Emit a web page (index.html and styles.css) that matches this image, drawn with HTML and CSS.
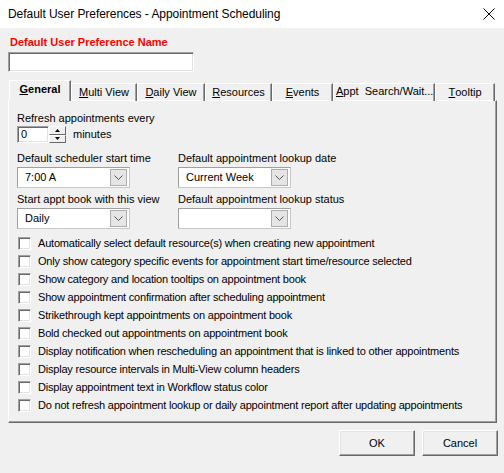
FILE: index.html
```html
<!DOCTYPE html>
<html>
<head>
<meta charset="utf-8">
<link rel="stylesheet" href="styles.css">
</head>
<body>
<div class="window">
  <div class="titlebar">
    <span class="title">Default User Preferences - Appointment Scheduling</span>
    <svg class="close" width="12" height="12" viewBox="0 0 12 12"><path d="M0.5 0.5 L11.5 11.5 M11.5 0.5 L0.5 11.5" stroke="#000" stroke-width="1" fill="none"/></svg>
  </div>
  <div class="content">
    <div class="name-label">Default User Preference Name</div>
    <div class="name-input sunken"></div>
    <div class="tabs">
      <div class="tab selected w1"><b><u>G</u>eneral</b></div>
      <div class="tab w2"><u>M</u>ulti View</div>
      <div class="tab w3"><u>D</u>aily View</div>
      <div class="tab w4"><u>R</u>esources</div>
      <div class="tab w5"><u>E</u>vents</div>
      <div class="tab w6 left"><u>A</u>ppt  Search/Wait...</div>
      <div class="tab w7"><u>T</u>ooltip</div>
    </div>
    <div class="panel">
      <div class="label first">Refresh appointments every</div>
      <div class="spin-row">
        <div class="spin">
          <div class="spin-field sunken">0</div>
          <div class="spin-btns">
            <div class="spin-btn"><svg width="5" height="3" viewBox="0 0 5 3"><path d="M2.5 0 L5 3 L0 3 Z" fill="#000"/></svg></div>
            <div class="spin-btn"><svg width="5" height="3" viewBox="0 0 5 3"><path d="M0 0 L5 0 L2.5 3 Z" fill="#000"/></svg></div>
          </div>
        </div>
        <span class="minutes">minutes</span>
      </div>
      <div class="grid">
        <div class="field">
          <div class="label">Default scheduler start time</div>
          <div class="combo"><span class="combo-text">7:00 A</span><span class="drop"><svg width="9" height="5" viewBox="0 0 9 5"><path d="M0.5 0.5 L4.5 4.5 L8.5 0.5" stroke="#555" fill="none"/></svg></span></div>
        </div>
        <div class="field">
          <div class="label">Default appointment lookup date</div>
          <div class="combo"><span class="combo-text">Current Week</span><span class="drop"><svg width="9" height="5" viewBox="0 0 9 5"><path d="M0.5 0.5 L4.5 4.5 L8.5 0.5" stroke="#555" fill="none"/></svg></span></div>
        </div>
        <div class="field">
          <div class="label">Start appt book with this view</div>
          <div class="combo"><span class="combo-text">Daily</span><span class="drop"><svg width="9" height="5" viewBox="0 0 9 5"><path d="M0.5 0.5 L4.5 4.5 L8.5 0.5" stroke="#555" fill="none"/></svg></span></div>
        </div>
        <div class="field">
          <div class="label">Default appointment lookup status</div>
          <div class="combo"><span class="combo-text"></span><span class="drop"><svg width="9" height="5" viewBox="0 0 9 5"><path d="M0.5 0.5 L4.5 4.5 L8.5 0.5" stroke="#555" fill="none"/></svg></span></div>
        </div>
      </div>
      <div class="checks">
        <div class="check"><span class="box"></span>Automatically select default resource(s) when creating new appointment</div>
        <div class="check"><span class="box"></span>Only show category specific events for appointment start time/resource selected</div>
        <div class="check"><span class="box"></span>Show category and location tooltips on appointment book</div>
        <div class="check"><span class="box"></span>Show appointment confirmation after scheduling appointment</div>
        <div class="check"><span class="box"></span>Strikethrough kept appointments on appointment book</div>
        <div class="check"><span class="box"></span>Bold checked out appointments on appointment book</div>
        <div class="check"><span class="box"></span>Display notification when rescheduling an appointment that is linked to other appointments</div>
        <div class="check"><span class="box"></span>Display resource intervals in Multi-View column headers</div>
        <div class="check"><span class="box"></span>Display appointment text in Workflow status color</div>
        <div class="check"><span class="box"></span>Do not refresh appointment lookup or daily appointment report after updating appointments</div>
      </div>
    </div>
    <div class="buttons">
      <div class="btn">OK</div>
      <div class="btn">Cancel</div>
    </div>
  </div>
</div>
</body>
</html>
```

FILE: styles.css
```css
* { box-sizing: border-box; }
html, body { margin: 0; padding: 0; }
body {
  width: 504px;
  height: 473px;
  overflow: hidden;
  background: #f0f0f0;
  font-family: "Liberation Sans", Arial, sans-serif;
  font-size: 11px;
  color: #000;
}
.titlebar {
  height: 28px;
  background: #fff;
  display: flex;
  align-items: center;
  justify-content: space-between;
  padding: 0 9px 0 8px;
}
.title {
  font-size: 12px;
  color: #000;
  letter-spacing: -0.05px;
}
.close { display: block; }
.content {
  padding: 8px 0 0 8px;
}
.name-label {
  color: #ff0000;
  font-weight: bold;
  line-height: 13px;
  margin-left: 2px;
}
.sunken {
  background: #fff;
  border-top: 1px solid #a0a0a0;
  border-left: 1px solid #a0a0a0;
  border-right: 1px solid #fff;
  border-bottom: 1px solid #fff;
  box-shadow: inset 1px 1px 0 #696969, inset -1px -1px 0 #e3e3e3;
}
.name-input {
  width: 186px;
  height: 20px;
  margin-top: 3px;
}
.tabs {
  display: flex;
  height: 21px;
  margin-top: 8px;
  padding-left: 1px;
  position: relative;
  z-index: 2;
  align-items: flex-end;
}
.tab {
  height: 18px;
  border-top: 1px solid #fff;
  border-left: 1px solid #fff;
  border-right: 1px solid #696969;
  box-shadow: inset -1px 0 0 #a0a0a0;
  display: flex;
  align-items: center;
  justify-content: center;
  line-height: 13px;
  padding-bottom: 1px;
  white-space: pre;
}
.tab.left { justify-content: flex-start; padding-left: 2px; padding-bottom: 3px; }
.tab.selected {
  height: 21px;
  background: #f0f0f0;
  padding-bottom: 3px;
  border-top-left-radius: 1px;
}
.w1 { width: 62px; }
.w2 { width: 66px; }
.w3 { width: 68px; }
.w4 { width: 67px; }
.w5 { width: 61px; }
.w6 { width: 102px; }
.w7 { width: 60px; }
.panel {
  width: 489px;
  height: 323px;
  margin-top: -1px;
  border-top: 1px solid #fff;
  border-left: 1px solid #fff;
  border-right: 1px solid #696969;
  border-bottom: 1px solid #696969;
  box-shadow: inset -1px -1px 0 #a0a0a0;
  padding: 11px 0 0 8px;
}
.label {
  line-height: 13px;
  white-space: nowrap;
}
.spin-row {
  display: flex;
  align-items: center;
  margin-top: 1px;
  height: 17px;
}
.spin {
  display: flex;
  width: 49px;
  height: 17px;
}
.spin-field {
  width: 32px;
  height: 17px;
  line-height: 14px;
  padding-left: 3px;
}
.spin-btns {
  display: flex;
  flex-direction: column;
  width: 17px;
}
.spin-btn {
  height: 8.5px;
  background: #f0f0f0;
  border-top: 1px solid #fff;
  border-left: 1px solid #fff;
  border-right: 1px solid #696969;
  border-bottom: 1px solid #696969;
  display: flex;
  align-items: center;
  justify-content: center;
}
.spin-btn svg { display: block; }
.minutes { margin-left: 7px; line-height: 13px; }
.grid {
  display: grid;
  grid-template-columns: 161px 113px;
  row-gap: 5px;
  margin-top: 9px;
}
.combo {
  margin-top: 2px;
  width: 113px;
  height: 21px;
  background: #fff;
  border: 1px solid #a0a0a0;
  border-bottom-color: #c8c8c8;
  border-right-color: #c8c8c8;
  display: flex;
  align-items: center;
  justify-content: space-between;
  padding: 1px;
}
.combo-text {
  padding-left: 6px;
  line-height: 13px;
}
.drop {
  width: 17px;
  height: 17px;
  background: #e5e5e5;
  border: 1px solid #adadad;
  display: flex;
  align-items: center;
  justify-content: center;
  margin-right: 1px;
}
.drop svg { display: block; }
.checks {
  margin-top: 5px;
  display: flex;
  flex-direction: column;
}
.check {
  height: 18px;
  display: flex;
  align-items: center;
  white-space: nowrap;
  line-height: 13px;
  letter-spacing: -0.2px;
}
.box {
  width: 13px;
  height: 13px;
  margin-left: 1px;
  margin-right: 7px;
  background: #fff;
  border-top: 1px solid #a0a0a0;
  border-left: 1px solid #a0a0a0;
  border-right: 1px solid #fff;
  border-bottom: 1px solid #fff;
  box-shadow: inset 1px 1px 0 #696969, inset -1px -1px 0 #e3e3e3;
  flex: none;
}
.buttons {
  display: flex;
  justify-content: flex-end;
  gap: 7px;
  margin-top: 7px;
  width: 490px;
}
.btn {
  width: 76px;
  height: 26px;
  background: #f0f0f0;
  border-top: 1px solid #fff;
  border-left: 1px solid #fff;
  border-right: 1px solid #696969;
  border-bottom: 1px solid #696969;
  box-shadow: inset -1px -1px 0 #a0a0a0, inset 1px 1px 0 #e3e3e3;
  display: flex;
  align-items: center;
  justify-content: center;
  line-height: 13px;
}
```
